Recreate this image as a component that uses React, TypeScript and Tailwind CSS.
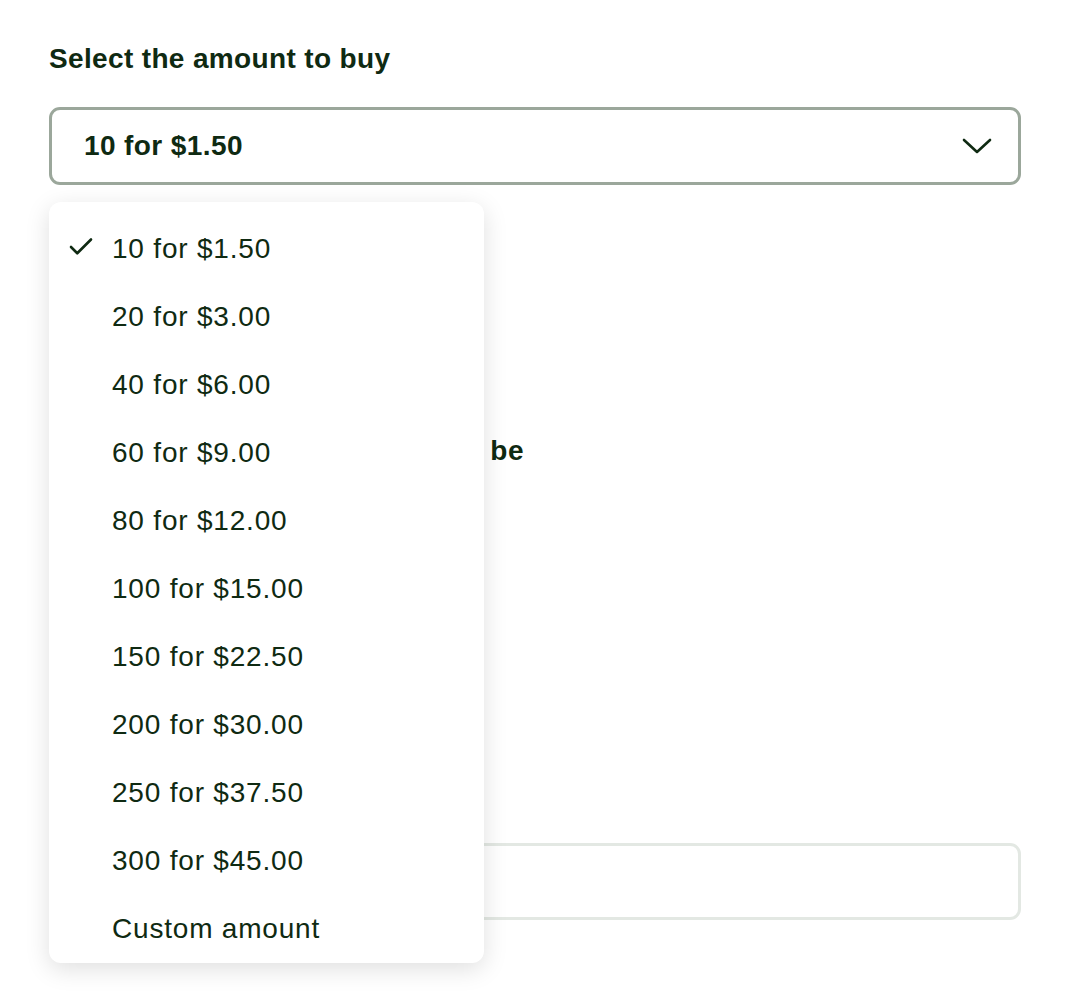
import { Check } from "lucide-react";

const options = [
  "10 for $1.50",
  "20 for $3.00",
  "40 for $6.00",
  "60 for $9.00",
  "80 for $12.00",
  "100 for $15.00",
  "150 for $22.50",
  "200 for $30.00",
  "250 for $37.50",
  "300 for $45.00",
  "Custom amount",
];

export default function App() {
  const selected = options[0];

  return (
    <div
      className="min-h-screen bg-white text-[#0f2a12]"
      style={{ fontFamily: '"Liberation Sans", Arial, sans-serif' }}
    >
      <div className="w-[1070px] px-[49px] pt-[43px]">
        <label className="block text-[28px] leading-[32px] font-bold tracking-[0.35px]">
          Select the amount to buy
        </label>

        <div className="relative mt-[32px]">
          <button className="flex h-[78px] w-full items-center justify-between rounded-[11px] border-[3px] border-[#9ba79b] bg-white pl-[32px] pr-[26px] text-left">
            <span className="text-[28px] font-bold tracking-[0.4px]">{selected}</span>
            <svg width="30" height="16" viewBox="0 0 30 16" fill="none">
              <path d="M2 2 15 14 28 2" stroke="#0f2a12" strokeWidth="2.6" strokeLinecap="round" strokeLinejoin="round" />
            </svg>
          </button>

          <ul className="absolute left-0 top-full z-10 mt-[17px] w-[435px] rounded-[12px] bg-white pt-[13px] shadow-[0_6px_24px_rgba(0,0,0,0.13)]">
            {options.map((opt) => (
              <li key={opt} className="flex h-[68px] items-center">
                <span className="flex w-[63px] justify-center pl-[1px]">
                  {opt === selected && <Check size={30} strokeWidth={2.1} className="-mt-[5px]" />}
                </span>
                <span className="text-[28px] tracking-[0.8px]">{opt}</span>
              </li>
            ))}
          </ul>
        </div>

        <label className="mt-[250px] block text-[28px] leading-[32px] font-bold tracking-[0.6px]">
          How many credits should there be
        </label>

        <input
          aria-label="Credits"
          className="mt-[376px] block h-[77px] w-full rounded-[11px] border-[3px] border-[#e3e8e3] bg-white px-[32px] text-[26px] outline-none"
        />
      </div>
    </div>
  );
}
